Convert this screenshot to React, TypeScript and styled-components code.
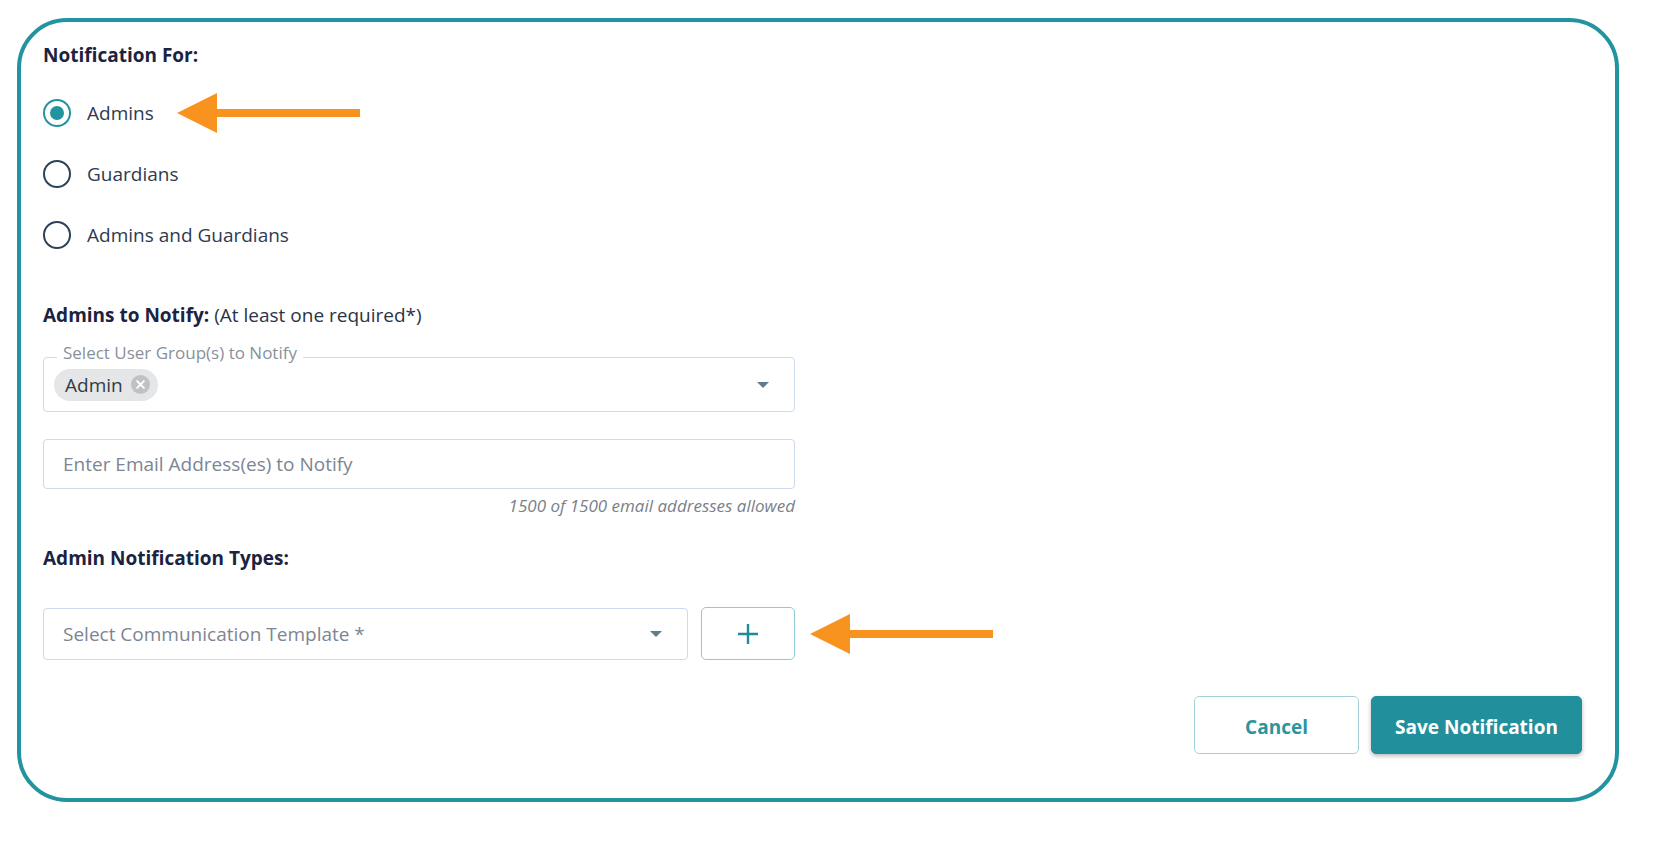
import React from "react";
import styled, { createGlobalStyle } from "styled-components";

const GlobalStyle = createGlobalStyle`
  body {
    margin: 0;
    background: #ffffff;
    font-family: "Open Sans", "Noto Sans", sans-serif;
  }
`;

const Card = styled.div`
  box-sizing: border-box;
  width: 1602px;
  margin: 18px 0 0 17px;
  padding: 21px 33px 44px 22px;
  border: 4px solid #2294a0;
  border-radius: 50px;
  display: flex;
  flex-direction: column;
`;

const Heading = styled.div<{ $mt?: number }>`
  margin-top: ${({ $mt }) => $mt ?? 0}px;
  font-size: 19px;
  line-height: 24px;
  font-weight: 700;
  color: #1b2340;
`;

const Note = styled.span`
  font-weight: 400;
  color: #2a3347;
`;

const RadioList = styled.div`
  margin-top: 15px;
  display: flex;
  flex-direction: column;
`;

const RadioRow = styled.label`
  height: 61px;
  display: flex;
  align-items: center;
  cursor: pointer;
`;

const RadioCircle = styled.span<{ $checked?: boolean }>`
  box-sizing: border-box;
  width: 28px;
  height: 28px;
  border-radius: 50%;
  border: 2.5px solid ${({ $checked }) => ($checked ? "#2294a0" : "#2c4257")};
  display: flex;
  align-items: center;
  justify-content: center;
  &::after {
    content: "";
    display: ${({ $checked }) => ($checked ? "block" : "none")};
    width: 14px;
    height: 14px;
    border-radius: 50%;
    background: #2294a0;
  }
`;

const RadioLabel = styled.span`
  margin-left: 16px;
  font-size: 19px;
  color: #2e3a51;
`;

const FieldColumn = styled.div`
  width: 752px;
  display: flex;
  flex-direction: column;
`;

const Outline = styled.div<{ $mt: number; $h: number }>`
  position: relative;
  box-sizing: border-box;
  margin-top: ${({ $mt }) => $mt}px;
  height: ${({ $h }) => $h}px;
  border: 1px solid #cbdaee;
  border-radius: 4px;
  display: flex;
  align-items: center;
  padding: 0 25px 0 19px;
`;

const FloatingLabel = styled.span`
  position: absolute;
  top: -16px;
  left: 13px;
  padding: 0 6px;
  background: #ffffff;
  font-size: 17px;
  line-height: 22px;
  color: #8a909b;
`;

const ChipArea = styled.div`
  flex: 1;
  display: flex;
  align-items: center;
  margin-left: -9px;
`;

const Chip = styled.span`
  height: 32px;
  padding: 0 8px 0 11px;
  border-radius: 16px;
  background: #e5e6e8;
  display: flex;
  align-items: center;
  gap: 8px;
  font-size: 19px;
  color: #333a44;
`;

const Placeholder = styled.span`
  flex: 1;
  font-size: 19px;
  color: #7d8593;
`;

const Caret = styled.span`
  width: 0;
  height: 0;
  border-left: 6.5px solid transparent;
  border-right: 6.5px solid transparent;
  border-top: 6.5px solid #5f7d8c;
`;

const Helper = styled.div`
  margin-top: 7px;
  text-align: right;
  font-size: 17px;
  line-height: 20px;
  font-style: italic;
  color: #7a7f88;
`;

const TemplateRow = styled.div`
  margin-top: 37px;
  display: flex;
  align-items: center;
`;

const TemplateSelect = styled(Outline)`
  width: 645px;
  margin-top: 0;
`;

const AddButton = styled.button`
  box-sizing: border-box;
  margin-left: 13px;
  width: 94px;
  height: 53px;
  border: 1.5px solid #8ecad1;
  border-radius: 5px;
  background: #ffffff;
  display: flex;
  align-items: center;
  justify-content: center;
  cursor: pointer;
`;

const ArrowMark = styled.svg<{ $ml: number }>`
  margin-left: ${({ $ml }) => $ml}px;
  flex-shrink: 0;
`;

const Actions = styled.div`
  margin-top: 36px;
  display: flex;
  justify-content: flex-end;
  gap: 12px;
`;

const Button = styled.button<{ $primary?: boolean }>`
  box-sizing: border-box;
  height: 58px;
  padding: 3px 0 0;
  width: ${({ $primary }) => ($primary ? 211 : 165)}px;
  border-radius: 5px;
  border: 1.5px solid ${({ $primary }) => ($primary ? "#21909c" : "#a2d2d8")};
  background: ${({ $primary }) => ($primary ? "#21909c" : "#ffffff")};
  color: ${({ $primary }) => ($primary ? "#ffffff" : "#2a949f")};
  box-shadow: ${({ $primary }) => ($primary ? "0 2px 4px rgba(0,0,0,0.28)" : "none")};
  font-family: "Open Sans", "Noto Sans", sans-serif;
  font-size: 19px;
  font-weight: 700;
  cursor: pointer;
`;

const Arrow = ({ ml }: { ml: number }) => (
  <ArrowMark $ml={ml} width="184" height="42" viewBox="0 0 184 42">
    <polygon points="0,21 40,1 40,17 183,17 183,25 40,25 40,41" fill="#f7931e" />
  </ArrowMark>
);

const ClearIcon = () => (
  <svg width="19" height="19" viewBox="0 0 18 18">
    <circle cx="9" cy="9" r="9" fill="#bfc1c5" />
    <path d="M5.8 5.8 L12.2 12.2 M12.2 5.8 L5.8 12.2" stroke="#ffffff" strokeWidth="1.8" strokeLinecap="round" />
  </svg>
);

const PlusIcon = () => (
  <svg width="22" height="22" viewBox="0 0 22 22">
    <path d="M11 1 V21 M1 11 H21" stroke="#1f8d99" strokeWidth="2.4" />
  </svg>
);

const options = [
  { label: "Admins", checked: true },
  { label: "Guardians", checked: false },
  { label: "Admins and Guardians", checked: false },
];

const App = () => {
  return (
    <>
      <GlobalStyle />
      <Card>
        <Heading>Notification For:</Heading>
        <RadioList>
          {options.map((o) => (
            <RadioRow key={o.label}>
              <RadioCircle $checked={o.checked} />
              <RadioLabel>{o.label}</RadioLabel>
              {o.checked && <Arrow ml={23} />}
            </RadioRow>
          ))}
        </RadioList>

        <Heading $mt={38}>
          Admins to Notify: <Note>(At least one required*)</Note>
        </Heading>
        <FieldColumn>
          <Outline $mt={30} $h={55}>
            <FloatingLabel>Select User Group(s) to Notify</FloatingLabel>
            <ChipArea>
              <Chip>
                Admin
                <ClearIcon />
              </Chip>
            </ChipArea>
            <Caret />
          </Outline>
          <Outline $mt={27} $h={50}>
            <Placeholder>Enter Email Address(es) to Notify</Placeholder>
          </Outline>
          <Helper>1500 of 1500 email addresses allowed</Helper>
        </FieldColumn>

        <Heading $mt={30}>Admin Notification Types:</Heading>
        <TemplateRow>
          <TemplateSelect $mt={0} $h={52}>
            <Placeholder>Select Communication Template *</Placeholder>
            <Caret />
          </TemplateSelect>
          <AddButton aria-label="Add">
            <PlusIcon />
          </AddButton>
          <Arrow ml={15} />
        </TemplateRow>

        <Actions>
          <Button>Cancel</Button>
          <Button $primary>Save Notification</Button>
        </Actions>
      </Card>
    </>
  );
};

export default App;
